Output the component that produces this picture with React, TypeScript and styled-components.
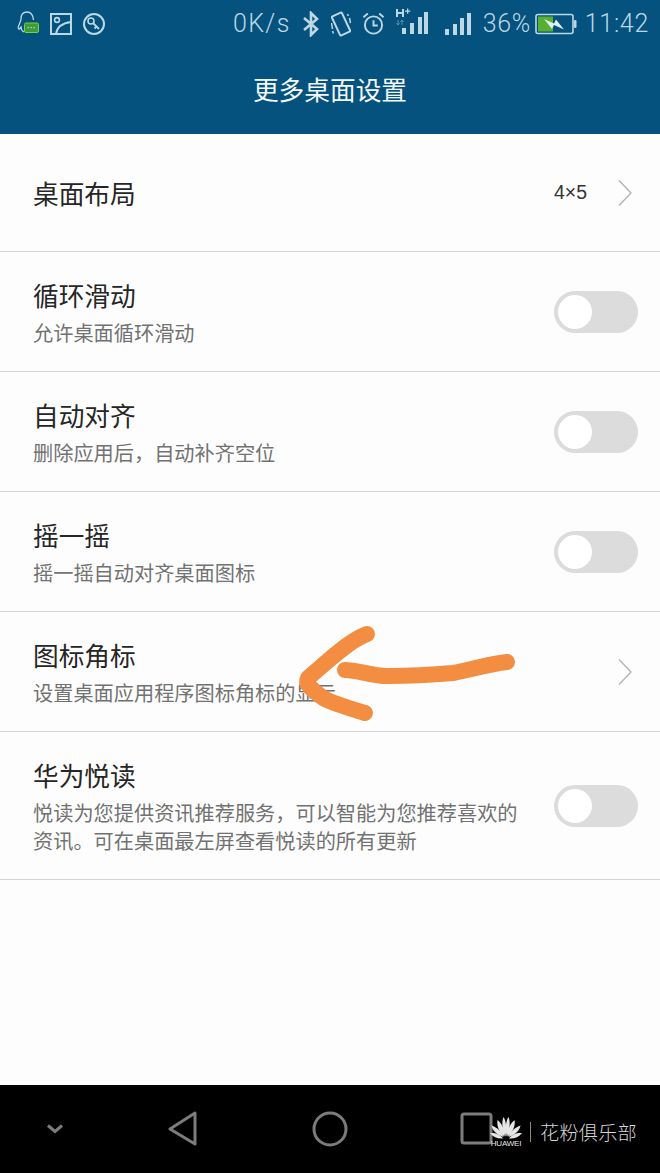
import React from 'react';
import styled, { createGlobalStyle } from 'styled-components';

const GlobalStyle = createGlobalStyle`
  html, body {
    margin: 0;
    padding: 0;
    background: #fff;
  }
  * {
    box-sizing: border-box;
  }
`;

const CJK = `'Roboto', 'Noto Sans CJK SC', sans-serif`;

const Screen = styled.div`
  position: relative;
  width: 660px;
  height: 1173px;
  display: flex;
  flex-direction: column;
  overflow: hidden;
  background: #fdfdfd;
  font-family: ${CJK};
`;

const Header = styled.header`
  height: 134px;
  flex-shrink: 0;
  background: #04527d;
  color: #fff;
`;

const StatusBar = styled.div`
  height: 48px;
  display: flex;
  align-items: center;
  justify-content: space-between;
  padding: 0 11px 0 16px;
  color: #bcd8e4;
`;

const StatusGroup = styled.div<{ $gap: number }>`
  display: flex;
  align-items: center;
  gap: ${({ $gap }) => $gap}px;
`;

const StatusText = styled.span<{ $spacing?: number }>`
  font-size: 25px;
  line-height: 48px;
  font-weight: 300;
  letter-spacing: ${({ $spacing }) => $spacing ?? 0.6}px;
  white-space: nowrap;
`;

const Title = styled.h1`
  margin: 0;
  height: 84px;
  padding-bottom: 3px;
  display: flex;
  align-items: center;
  justify-content: center;
  font-size: 25.7px;
  font-weight: 400;
  color: #f4f8fa;
`;

const List = styled.main`
  flex: 1;
  display: flex;
  flex-direction: column;
`;

const Row = styled.div<{ $height: number }>`
  height: ${({ $height }) => $height}px;
  flex-shrink: 0;
  display: flex;
  align-items: center;
  justify-content: space-between;
  padding: 0 22px 0 33px;
  border-bottom: 1px solid #d6d6d6;
`;

const RowText = styled.div`
  display: flex;
  flex-direction: column;
  gap: 5px;
  width: 490px;
  padding-top: 4px;
`;

const RowTitle = styled.div`
  font-size: 25.7px;
  line-height: 36px;
  color: #262626;
`;

const RowSub = styled.div`
  font-size: 20.2px;
  line-height: 28px;
  color: #727272;
`;

const RowValue = styled.div`
  display: flex;
  align-items: center;
  gap: 30px;
  padding-right: 5px;
  font-family: 'Liberation Sans', sans-serif;
  font-size: 19.5px;
  color: #333;
`;

const Switch = styled.div`
  width: 84px;
  height: 42px;
  padding: 4px;
  border-radius: 21px;
  background: #dcdcdc;
`;

const Knob = styled.div`
  width: 34px;
  height: 34px;
  border-radius: 50%;
  background: #fff;
`;

const NavBar = styled.nav`
  height: 88px;
  flex-shrink: 0;
  background: #000;
  display: flex;
  align-items: center;
  color: #7c7c7c;
`;

const NavSlot = styled.div<{ $width: number }>`
  width: ${({ $width }) => $width}px;
  display: flex;
  justify-content: center;
`;

const Watermark = styled.div`
  position: absolute;
  left: 489px;
  top: 1116px;
  display: flex;
  align-items: center;
  color: #d6d6d6;
`;

const LogoBox = styled.div`
  width: 34px;
  display: flex;
  flex-direction: column;
  align-items: center;
`;

const LogoText = styled.span`
  font-family: 'Liberation Sans', sans-serif;
  font-size: 8px;
  line-height: 8px;
  color: #e6e6e6;
  letter-spacing: -0.2px;
`;

const WatermarkLine = styled.div`
  width: 1px;
  height: 20px;
  margin: 0 9px 0 7px;
  background: #8a8a8a;
`;

const WatermarkText = styled.span`
  font-size: 19.2px;
  font-weight: 300;
  letter-spacing: 0.2px;
  white-space: nowrap;
`;

const ArrowOverlay = styled.svg`
  position: absolute;
  left: 280px;
  top: 610px;
`;

const ChevronSlot = styled.div`
  display: flex;
  padding-right: 5px;
`;

const Chevron = () => (
  <svg width="16" height="28" viewBox="0 0 16 28" fill="none" stroke="#b4b4b4" strokeWidth="1.4">
    <path d="M2 1.500 L14 14 L2 26.500" />
  </svg>
);

const QQIcon = () => (
  <svg width="24" height="30" viewBox="0 0 24 30" fill="none">
    <path
      d="M11 3c-4 0-6 3-6 7 0 2-1 3-2 6-1 2-1 4 0 4 1 0 1-1 2-2 0 2 1 4 3 5M11 3c4 0 6 3 6.500 8"
      stroke="#bcd8e4"
      strokeWidth="1.300"
    />
    <rect x="8.500" y="14" width="14" height="9.500" rx="1.500" fill="#3f9a3a" stroke="#7ad04a" />
    <path d="M11.500 18.700h8" stroke="#cfe8a8" strokeWidth="1" strokeDasharray="1.500 1.500" />
  </svg>
);

const PictureIcon = () => (
  <svg width="24" height="24" viewBox="0 0 24 24" fill="none" stroke="#bcd8e4" strokeWidth="2">
    <rect x="2" y="2" width="20" height="20" />
    <circle cx="8" cy="8" r="2.400" strokeWidth="1.600" />
    <path d="M7 22c1-7 7-11 15-12" />
  </svg>
);

const KeyIcon = () => (
  <svg width="24" height="24" viewBox="0 0 24 24" fill="none" stroke="#bcd8e4" strokeWidth="2">
    <circle cx="12" cy="12" r="10" />
    <circle cx="9" cy="9" r="3" strokeWidth="1.600" />
    <path d="M11 11l6 6M14.500 14.500l-2 2" strokeWidth="1.800" />
  </svg>
);

const BluetoothIcon = () => (
  <svg width="18" height="26" viewBox="0 0 18 26" fill="none" stroke="#bcd8e4" strokeWidth="2.600">
    <path d="M2 7l13 11-6 6V2l6 6L2 19" />
  </svg>
);

const VibrateIcon = () => (
  <svg width="20" height="26" viewBox="1 0 20 26" fill="none" stroke="#bcd8e4" strokeWidth="2">
    <rect x="5.500" y="2.500" width="11" height="21" rx="1" transform="rotate(-25 11 13)" />
    <path d="M1.500 12l1 6M2.500 20l1 2.500M19.500 7l1 5M17.500 3l.8 2" strokeWidth="1.500" />
  </svg>
);

const AlarmIcon = () => (
  <svg width="23" height="26" viewBox="0 0 24 26" fill="none" stroke="#bcd8e4" strokeWidth="2">
    <circle cx="12" cy="14" r="9" />
    <path d="M12 9v5.500h4.500M1.500 6L6 2M22.500 6L18 2" />
  </svg>
);

const SignalBars = () => (
  <svg width="27" height="22" viewBox="0 0 27 22" fill="#bcd8e4">
    <rect x="0" y="16" width="4" height="6" />
    <rect x="8" y="11" width="4" height="11" />
    <rect x="15" y="5" width="4" height="17" />
    <rect x="22" y="0" width="4" height="22" />
  </svg>
);

const HPlusSignal = () => (
  <svg width="33" height="32" viewBox="0 0 33 32" fill="#bcd8e4">
    <path d="M0 1h2v3h4V1h2v8H6V6H2v3H0zM9 2.500h2V.5h1.300v2h2v1.300h-2v2H11v-2H9z" />
    <path d="M2 12v5M0.500 15l1.500 2 1.500-2M6 17v-5M4.500 14L6 12l1.500 2" stroke="#5d93ad" strokeWidth="1" fill="none" />
    <rect x="6" y="20" width="4" height="6" />
    <rect x="14" y="15" width="4" height="11" />
    <rect x="22" y="9" width="4" height="17" />
    <rect x="28" y="4" width="4" height="22" />
  </svg>
);

const BatteryIcon = () => (
  <svg width="42" height="22" viewBox="0 0 42 22" fill="none">
    <rect x="1" y="1.500" width="37" height="19" rx="2" stroke="#bcd8e4" strokeWidth="1.600" />
    <rect x="3" y="3.500" width="15" height="15" fill="#58b030" />
    <rect x="39" y="7" width="2.500" height="8" rx="1" fill="#bcd8e4" />
    <path d="M9 6l10 4.500 2-4 8 10-10-4.500-2 4z" fill="#dfeef0" />
  </svg>
);

const BackIcon = () => (
  <svg width="32" height="36" viewBox="0 0 32 36" fill="none" stroke="#7c7c7c" strokeWidth="3" strokeLinejoin="round">
    <path d="M28 2v31L3 18z" />
  </svg>
);

const HomeIcon = () => (
  <svg width="36" height="36" viewBox="0 0 36 36" fill="none" stroke="#7c7c7c" strokeWidth="3">
    <circle cx="18" cy="18" r="16" />
  </svg>
);

const RecentIcon = () => (
  <svg width="34" height="34" viewBox="0 0 34 34" fill="none" stroke="#7c7c7c" strokeWidth="3">
    <rect x="2" y="2" width="29" height="29" rx="2" />
  </svg>
);

const HideIcon = () => (
  <svg width="18" height="12" viewBox="0 0 18 12" fill="none" stroke="#7c7c7c" strokeWidth="3">
    <path d="M2 2.500l7 6 7-6" />
  </svg>
);

const HuaweiPetals = () => (
  <svg width="32" height="24" viewBox="0 0 32 24" fill="#e6e6e6">
    <path d="M15.400 20.500C12 14 11.500 6 13.500 1c2.500 3 3.500 12 1.900 19.500z" />
    <path d="M16.600 20.500C20 14 20.500 6 18.500 1c-2.500 3-3.500 12-1.900 19.500z" />
    <path d="M14.500 20.500C9 16.500 6.500 10 7.500 4c4 3 7.500 10 7 16.500z" />
    <path d="M17.500 20.500C23 16.500 25.500 10 24.500 4c-4 3-7.500 10-7 16.500z" />
    <path d="M13.500 21C8 19.500 2.500 15 1.500 9.500c5 1.500 10 6 12 11.500z" />
    <path d="M18.500 21c5.500-1.500 11-6 12-11.500-5 1.500-10 6-12 11.500z" />
    <path d="M13 22.500c-5 .5-10-1.500-13-5.500 5-.5 10.500 1.500 13 5.500z" />
    <path d="M19 22.500c5 .5 10-1.500 13-5.500-5-.5-10.500 1.500-13 5.500z" />
  </svg>
);

type TSetting = {
  title: string;
  sub?: string;
  height: number;
  control: 'switch' | 'chevron' | 'value';
};

const settings: TSetting[] = [
  { title: '桌面布局', height: 118, control: 'value' },
  { title: '循环滑动', sub: '允许桌面循环滑动', height: 120, control: 'switch' },
  { title: '自动对齐', sub: '删除应用后，自动补齐空位', height: 120, control: 'switch' },
  { title: '摇一摇', sub: '摇一摇自动对齐桌面图标', height: 120, control: 'switch' },
  { title: '图标角标', sub: '设置桌面应用程序图标角标的显示', height: 120, control: 'chevron' },
  {
    title: '华为悦读',
    sub: '悦读为您提供资讯推荐服务，可以智能为您推荐喜欢的资讯。可在桌面最左屏查看悦读的所有更新',
    height: 148,
    control: 'switch',
  },
];

const App = () => (
  <Screen>
    <GlobalStyle />
    <Header>
      <StatusBar>
        <StatusGroup $gap={9}>
          <QQIcon />
          <PictureIcon />
          <KeyIcon />
        </StatusGroup>
        <StatusGroup $gap={4}>
          <StatusGroup $gap={16}>
            <StatusGroup $gap={11}>
              <StatusText $spacing={1.4}>0K/s</StatusText>
              <BluetoothIcon />
              <VibrateIcon />
              <AlarmIcon />
              <HPlusSignal />
            </StatusGroup>
            <StatusGroup $gap={11}>
              <SignalBars />
              <StatusText>36%</StatusText>
            </StatusGroup>
          </StatusGroup>
          <StatusGroup $gap={8}>
            <BatteryIcon />
            <StatusText $spacing={0.7}>11:42</StatusText>
          </StatusGroup>
        </StatusGroup>
      </StatusBar>
      <Title>更多桌面设置</Title>
    </Header>
    <List>
      {settings.map((item) => (
        <Row key={item.title} $height={item.height}>
          <RowText>
            <RowTitle>{item.title}</RowTitle>
            {item.sub && <RowSub>{item.sub}</RowSub>}
          </RowText>
          {item.control === 'switch' && (
            <Switch>
              <Knob />
            </Switch>
          )}
          {item.control === 'chevron' && (
            <ChevronSlot>
              <Chevron />
            </ChevronSlot>
          )}
          {item.control === 'value' && (
            <RowValue>
              <span>4×5</span>
              <Chevron />
            </RowValue>
          )}
        </Row>
      ))}
    </List>
    <NavBar>
      <NavSlot $width={110}>
        <HideIcon />
      </NavSlot>
      <NavSlot $width={146}>
        <BackIcon />
      </NavSlot>
      <NavSlot $width={148}>
        <HomeIcon />
      </NavSlot>
      <NavSlot $width={146}>
        <RecentIcon />
      </NavSlot>
    </NavBar>
    <Watermark>
      <LogoBox>
        <HuaweiPetals />
        <LogoText>HUAWEI</LogoText>
      </LogoBox>
      <WatermarkLine />
      <WatermarkText>花粉俱乐部</WatermarkText>
    </Watermark>
    <ArrowOverlay width="250" height="120" viewBox="0 0 250 120" fill="none" stroke="#f28d41" strokeWidth="15" strokeLinecap="round" strokeLinejoin="round">
      <path d="M87 24C74 29 62 39 50 49 42 56 35 62 28 68 26 72 27 74 30 77 36 83 41 87 47 90 58 95 72 99 85 103" strokeWidth="16" />
      <path d="M65 60C78 60 92 66 107 66 128 66 150 65 173 63 190 60 208 54 227 52" strokeWidth="16" />
    </ArrowOverlay>
  </Screen>
);

export default App;
